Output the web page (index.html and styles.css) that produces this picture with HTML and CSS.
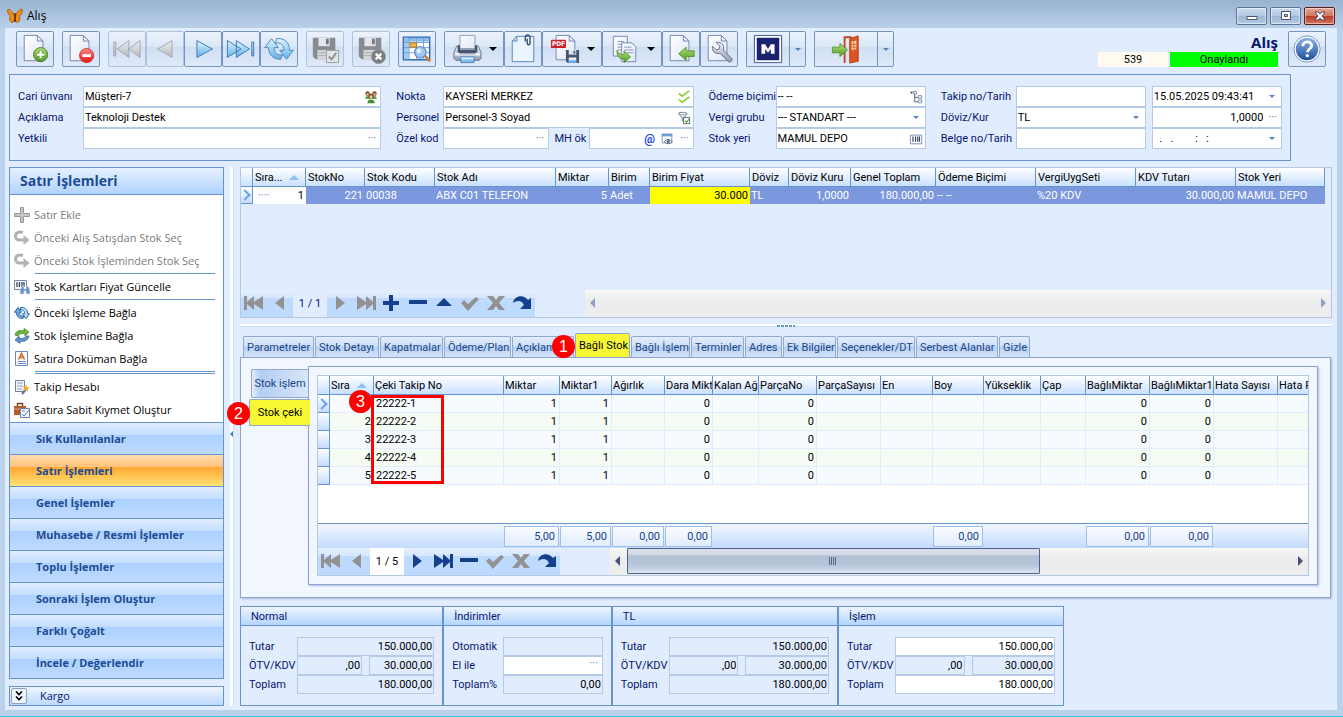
FILE: index.html
```html
<!DOCTYPE html>
<html lang="tr">
<head>
  <meta charset="UTF-8">
  <meta name="viewport" content="width=device-width, initial-scale=1.0">
  <title>Alış</title>
  <link rel="stylesheet" href="styles.css">
</head>
<body>
  <!-- Icon sprite -->
  <svg class="sprite" aria-hidden="true">
    <defs>
      <linearGradient id="gBlue" x1="0" y1="0" x2="0" y2="1"><stop offset="0" stop-color="#dff3ff"/><stop offset="1" stop-color="#63b1e8"/></linearGradient>
      <linearGradient id="gGray" x1="0" y1="0" x2="0" y2="1"><stop offset="0" stop-color="#eceef1"/><stop offset="1" stop-color="#b4b8be"/></linearGradient>
      <linearGradient id="gPage" x1="0" y1="0" x2="1" y2="1"><stop offset="0" stop-color="#ffffff"/><stop offset="1" stop-color="#dfe6f5"/></linearGradient>
      <linearGradient id="gGreen" x1="0" y1="0" x2="0" y2="1"><stop offset="0" stop-color="#b5e27c"/><stop offset="1" stop-color="#4f9a25"/></linearGradient>
      <linearGradient id="gRed" x1="0" y1="0" x2="0" y2="1"><stop offset="0" stop-color="#ff8d86"/><stop offset="1" stop-color="#e01414"/></linearGradient>
      <linearGradient id="gHelp" x1="0" y1="0" x2="0" y2="1"><stop offset="0" stop-color="#8fb2e6"/><stop offset="1" stop-color="#1e4f9e"/></linearGradient>
      <linearGradient id="gSteel" x1="0" y1="0" x2="0" y2="1"><stop offset="0" stop-color="#f3f5f9"/><stop offset="1" stop-color="#8d9bb3"/></linearGradient>
    </defs>
    <symbol id="page" viewBox="0 0 32 32"><path d="M4.500 1.500h14l6 6v21h-20z" fill="url(#gPage)" stroke="#7484b0"/><path d="M18.500 1.500v6h6z" fill="#e9effa" stroke="#7484b0"/></symbol>
    <symbol id="add" viewBox="0 0 32 32"><use href="#page"/><circle cx="22" cy="22" r="7.500" fill="url(#gGreen)" stroke="#3f7d1e"/><path d="M20.500 17.500h3v3h3v3h-3v3h-3v-3h-3v-3h3z" fill="#fff" stroke="#4b8a28" stroke-width=".6"/></symbol>
    <symbol id="del" viewBox="0 0 32 32"><use href="#page"/><circle cx="22" cy="23" r="7.500" fill="url(#gRed)" stroke="#d23030"/><rect x="17.500" y="21.500" width="9" height="3" fill="#fff"/></symbol>
    <symbol id="first" viewBox="0 0 32 32"><path d="M2 8.500h2v15H2zM18 7v18L5.500 16zM30 7v18L17.500 16z" fill="url(#gGray)" stroke="#a2a6ad"/></symbol>
    <symbol id="prev" viewBox="0 0 32 32"><path d="M23.500 7v18L8 16z" fill="url(#gGray)" stroke="#a2a6ad"/></symbol>
    <symbol id="next" viewBox="0 0 32 32"><path d="M9.500 7v18L26 16z" fill="url(#gBlue)" stroke="#3c77b5"/></symbol>
    <symbol id="last" viewBox="0 0 32 32"><path d="M11 7v18L25 16zM1.500 7v18L16 16zM27.500 8.500h2v15h-2z" fill="url(#gBlue)" stroke="#3c77b5"/></symbol>
    <symbol id="refresh" viewBox="0 0 32 32"><path d="M8 5L.8 14.500h4c0 9 7 13 13 12.500l2-5c-5 1.500-9-1.500-9-7.500h4.500z" fill="url(#gBlue)" stroke="#4a87bf"/><path d="M24 27l7.300-9.500h-4c0-9-6-13.500-14-12.500l-1 5c5-1.500 9 1.500 9 7.500h-4.500z" fill="url(#gBlue)" stroke="#4a87bf"/></symbol>
    <symbol id="disk" viewBox="0 0 32 32"><path d="M3 4h24v23H6l-3-3z" fill="#888c92"/><path d="M9 4h12v9H9z" fill="#e4e6e9"/><path d="M17 5h3v6h-3z" fill="#777b81"/><path d="M8 17h14v10H8z" fill="#d4d7da"/><path d="M9 20h12M9 23h12" stroke="#a5a9ae"/></symbol>
    <symbol id="diskok" viewBox="0 0 32 32"><use href="#disk"/><rect x="17.500" y="17.500" width="13" height="13" fill="#e1e3e6" stroke="#9a9ea5"/><path d="M20 24l3 3 5-7" fill="none" stroke="#8a8e94" stroke-width="2"/></symbol>
    <symbol id="diskx" viewBox="0 0 32 32"><use href="#disk"/><circle cx="24" cy="24" r="7.500" fill="#7a7d82" stroke="#92969c"/><path d="M21 21l6 6M27 21l-6 6" stroke="#fff" stroke-width="2.500"/></symbol>
    <symbol id="gridfind" viewBox="0 0 32 32"><path d="M1.500 3.500h28v24h-28z" fill="#fff" stroke="#2b64b5" stroke-width="1.500"/><path d="M2 4h5v23H2z" fill="#a5cdf0"/><path d="M2 4h27v4H2z" fill="#8cbdea"/><path d="M7.500 4v23M15.500 4v23M23 4v23M2 9h27M2 14.500h27M2 20h27" stroke="#6d9fd6"/><rect x="8.500" y="9.500" width="7" height="4.500" fill="#f2b84c" stroke="#b3751c"/><path d="M24 23l6 6" stroke="#c9813f" stroke-width="3"/><circle cx="19.500" cy="19.500" r="6" fill="#9dc9f7" stroke="#7390c4" stroke-width="1.500"/><circle cx="18" cy="18" r="2.500" fill="#dceeff"/></symbol>
    <symbol id="printer" viewBox="0 0 32 32"><path d="M8.500 1.500h16v14h-16z" fill="url(#gPage)" stroke="#8c9bb5"/><path d="M5 13h3v4h17v-4h3l3 7v6l-2 2H4l-2-2v-6z" fill="url(#gSteel)" stroke="#66738c"/><path d="M6 12h2.500v5h16v-5H27v7l-2 1.500H8L6 19z" fill="#465470"/><path d="M3 20.500h4l2 1.500h15l2-1.500h4V23H3z" fill="#f3f5f9"/><path d="M9.500 24.500h14v6h-14z" fill="#7fbdf0" stroke="#4f7fb8"/><path d="M10 25h13v2H10z" fill="#d9effd"/></symbol>
    <symbol id="clip" viewBox="0 0 32 32"><path d="M9.500 2.500h18v27h-23v-22z" fill="#eaf4ff" stroke="#4f80bd"/><path d="M9.500 2.500v5h-5z" fill="#cfe3f8" stroke="#4f80bd"/><path d="M18.500 8V3.500a2.500 2.500 0 0 1 5 0V10a1.500 1.500 0 0 1-3 0V5" fill="none" stroke="#3a4d6c" stroke-width="1.500"/></symbol>
    <symbol id="pdf" viewBox="0 0 32 32"><path d="M6.500 1.500h14l6 6v20h-20z" fill="url(#gPage)" stroke="#7484b0"/><path d="M20.500 1.500v6h6z" fill="#e9effa" stroke="#7484b0"/><rect x="1" y="6" width="16" height="9" rx="1" fill="#cf2027"/><text x="2" y="13" class="pdf-text">PDF</text><path d="M17 17h14v14H19l-2-2z" fill="#46546e"/><path d="M20 17h8v5h-8z" fill="#dfe5ee"/><path d="M25 18h2v3h-2z" fill="#46546e"/><path d="M20 25h8v6h-8z" fill="#e9eef5"/><path d="M20 28h8v3h-8z" fill="#67b0e6"/></symbol>
    <symbol id="copy" viewBox="0 0 32 32"><path d="M3.500 2.500h15v21h-15z" fill="url(#gPage)" stroke="#7484b0"/><path d="M8 8h7M8 11h7M8 14h7M8 17h7" stroke="#8193c4"/><path d="M12.500 9.500h11l4 4v16h-15z" fill="url(#gPage)" stroke="#7484b0"/><path d="M15 14h8M15 17h10M18 20h7" stroke="#8193c4"/><path d="M7.500 17.500c1 3 4 5 7.500 4.500v-4l7 6.500-7 6V27c-5 0-8-4-7.500-9.500z" fill="url(#gGreen)" stroke="#58942d"/></symbol>
    <symbol id="pageback" viewBox="0 0 32 32"><use href="#page"/><path d="M13.500 21l8-7v4h8.500v6h-8.500v4z" fill="url(#gGreen)" stroke="#58942d"/></symbol>
    <symbol id="wrench" viewBox="0 0 32 32"><use href="#page"/><path d="M9 13l4 4 3-1 1-3-4-4c4-1 8 1.500 8 6l-.5 2 9 9c1 3-1 4.500-3.500 3.500l-9-9c-5 1.500-9-2.500-8-7.500z" fill="url(#gSteel)" stroke="#5e6d85"/></symbol>
    <symbol id="mlogo" viewBox="0 0 32 32"><path d="M1.500 1.500h29v29h-29z" fill="#fff" stroke="#3a4c96"/><path d="M4 4h24v24H4z" fill="#1b2270"/><path d="M9 21V11h4l3 5 3-5h4v10h-4v-5l-3 4-3-4v5z" fill="#fff"/></symbol>
    <symbol id="door" viewBox="0 0 32 32"><path d="M14.500 31V3.500H22" fill="none" stroke="#c2481f" stroke-width="2"/><path d="M20 5l9-3v27l-9 2z" fill="#dc5525" stroke="#b73c12"/><path d="M22 8l5-1v9l-5 1z" fill="#ffe3b5"/><path d="M24.500 7v9M22 11h5M22 14h5" stroke="#dc5525"/><path d="M1.500 14h8v-4l8 7-8 7v-4h-8z" fill="url(#gGreen)" stroke="#58942d"/></symbol>
    <symbol id="help" viewBox="0 0 32 32"><circle cx="16" cy="16" r="14" fill="#fff" stroke="#7595c4"/><circle cx="16" cy="16" r="12" fill="url(#gHelp)"/><path d="M11.500 13c0-6 9.500-6 9.500-.5 0 3-4.500 3.500-4.500 7" fill="none" stroke="#fff" stroke-width="3"/><circle cx="16.300" cy="23" r="1.800" fill="#fff"/></symbol>
    <symbol id="butterfly" viewBox="0 0 16 16"><path d="M7.500 8C5 2 1 0 .5 2c0 3 1.500 5 3 6-2 2 0 6.500 1.500 6.500s2-2 2.500-4c.500 2 1.500 4 3 4S14 10 12 8c2-1 3.500-3 3.500-6C15 0 10.500 2 8.500 8z" fill="#f08a12" stroke="#a65209" stroke-width=".8"/><path d="M8 5v9" stroke="#4d2706" stroke-width="1.500"/></symbol>
    <symbol id="people" viewBox="0 0 16 16"><circle cx="4" cy="4" r="2.500" fill="#7a4b2b"/><circle cx="12" cy="4" r="2.500" fill="#7a4b2b"/><circle cx="4" cy="4.500" r="1.200" fill="#f1c595"/><circle cx="12" cy="4.500" r="1.200" fill="#f1c595"/><path d="M1 10l2-3h3l1 3zM9 10l1-3h3l2 3z" fill="#3f9430"/><circle cx="8" cy="7" r="3" fill="#8d5933"/><circle cx="8" cy="8" r="1.600" fill="#f1c595"/><path d="M3.500 15l2-4h5l2 4z" fill="#3f9430"/></symbol>
    <symbol id="checks" viewBox="0 0 16 16"><path d="M2 4l4 3 8-6M2 11l4 3 8-6" fill="none" stroke="#8fce3b" stroke-width="2"/></symbol>
    <symbol id="funnel" viewBox="0 0 16 16"><path d="M1.500 3c0-2 10-2 10 0L8 8v5l-2-2V8z" fill="#dfe4ec" stroke="#6b7689"/><ellipse cx="6.500" cy="3" rx="4" ry="1.300" fill="#fff" stroke="#6b7689" stroke-width=".7"/><rect x="7.500" y="7.500" width="7" height="7" fill="#fff" stroke="#54627c"/><path d="M9 11l2 2 3-4" fill="none" stroke="#5ca132" stroke-width="1.500"/></symbol>
    <symbol id="eye" viewBox="0 0 16 16"><path d="M2.500 2.500h11v10h-11z" fill="#fff" stroke="#668db8"/><path d="M2 2h12v3H2z" fill="#6c9cd0"/><path d="M5 11q4-5 9 0-4 5-9 0z" fill="#fff" stroke="#45536b"/><circle cx="9.500" cy="11" r="1.700" fill="#45536b"/></symbol>
    <symbol id="tree" viewBox="0 0 16 16"><path d="M1 2h4L3 4.500z" fill="#44516d"/><path d="M6.500 4v9.500H10M6.500 8.500H10" fill="none" stroke="#44516d"/><path d="M5.500 1.500h3v3h-3zM10.500 6.500h4v3h-4zM10.500 11.500h4v3h-4z" fill="#fff" stroke="#6d7fa6"/></symbol>
    <symbol id="barcode" viewBox="0 0 16 16"><path d="M1.500 3.500h13v10h-13z" fill="#fff" stroke="#7182ad"/><path d="M4.500 5v6M7.500 5v6M10 5v6M12 5v6" stroke="#30405f" stroke-width="1.300"/></symbol>
    <symbol id="plus" viewBox="0 0 16 16"><path d="M6.500.500h3v6h6v3h-6v6h-3v-6h-6v-3h6z" fill="#c4c6c8" stroke="#97999b"/></symbol>
    <symbol id="turn" viewBox="0 0 16 16"><path d="M9 2.500C-.5 0-.5 10.500 6 10h5" fill="none" stroke="#b0b2b4" stroke-width="3"/><path d="M9.500 5l6 5-6 5z" fill="#b0b2b4"/></symbol>
    <symbol id="stock" viewBox="0 0 16 16"><path d="M.5 1.500h12v9H.5z" fill="#fff" stroke="#7182ad"/><path d="M3 3v5M5.500 3v5M8 3v5M10 3v5" stroke="#30405f" stroke-width="1.300"/><path d="M6 11l2-4h2v3h2V7h2l2 4v4h-4v-3h-2v3H6z" fill="#6f92c9" stroke="#dbe6f7" stroke-width=".7"/></symbol>
    <symbol id="cycle" viewBox="0 0 32 32"><path d="M8 5L.8 14.500h4c0 9 7 13 13 12.500l2-5c-5 1.500-9-1.500-9-7.500h4.500z" fill="#6da9dd" stroke="#2d66a5" stroke-width="2"/><path d="M24 27l7.300-9.500h-4c0-9-6-13.500-14-12.500l-1 5c5-1.500 9 1.500 9 7.500h-4.500z" fill="#b4daf6" stroke="#2d66a5" stroke-width="2"/></symbol>
    <symbol id="swap" viewBox="0 0 16 16"><path d="M1 7c1-5 6-5 9-4V.5L15 4l-4 4V6C7 5 5 6 4 8z" fill="#6db445" stroke="#3c7c21" stroke-width=".7"/><path d="M15 8c-1 5-6 6-9 5v2.500L1 12l4-4v2c4 1 6 0 7-2z" fill="#5d91cf" stroke="#335f9b" stroke-width=".7"/></symbol>
    <symbol id="doc" viewBox="0 0 16 16"><path d="M1.500.500h12v14h-12z" fill="#f9fbff" stroke="#6e86bb"/><path d="M4.500 8.500l3-6 3 6M5.500 6.500h4" fill="none" stroke="#d8651f" stroke-width="1.500"/><path d="M4 10.500h8M4 12.500h8" stroke="#7288bd"/></symbol>
    <symbol id="wand" viewBox="0 0 16 16"><path d="M1.500 1.500h9v11h-9z" fill="#f3f6fc" stroke="#73809a"/><path d="M3 4h6M3 7h6M3 10h5" stroke="#8f9dba"/><path d="M8 15l5-6" stroke="#51719f" stroke-width="2"/><path d="M12 5l1 3 3 .5-2.500 1.500.5 3-2-2-3 1 1.500-3L9 7l2.500.5z" fill="#f2ad2f"/></symbol>
    <symbol id="asset" viewBox="0 0 16 16"><path d="M3.500 4V1.500h5V4" fill="none" stroke="#79431e" stroke-width="1.500"/><path d="M0 4h12v9H0z" fill="#b05e2c"/><path d="M0 7h12" stroke="#e5a26e"/><path d="M6.500 6.500h9v9h-9z" fill="#f3f7fd" stroke="#6d83a9"/><path d="M8 9h3M8 12l2 2 5-6" fill="none" stroke="#5579b3"/></symbol>
    <symbol id="n-first" viewBox="0 0 20 18"><path d="M0 2h3v6l7-6v6l9-6v14l-9-6v6l-7-6v6H0z"/></symbol>
    <symbol id="n-prev" viewBox="0 0 20 18"><path d="M14 2v14L5 9z"/></symbol>
    <symbol id="n-next" viewBox="0 0 20 18"><path d="M6 2v14l9-7z"/></symbol>
    <symbol id="n-last" viewBox="0 0 20 18"><path d="M20 2h-3v6l-7-6v6L1 2v14l9-6v6l7-6v6h3z"/></symbol>
    <symbol id="n-plus" viewBox="0 0 20 18"><path d="M7 1h4v6h6v4h-6v6H7v-6H1V7h6z"/></symbol>
    <symbol id="n-minus" viewBox="0 0 20 18"><path d="M1 6h18v4H1z"/></symbol>
    <symbol id="n-up" viewBox="0 0 20 18"><path d="M2 12h16l-8-8z"/></symbol>
    <symbol id="n-check" viewBox="0 0 20 18"><path d="M1 9l3-3 4 4 8-7 3 2L8 17z"/></symbol>
    <symbol id="n-x" viewBox="0 0 20 18"><path d="M1 2h6l3 4 3-4h6l-6 7 6 7h-6l-3-4-3 4H1l6-7z"/></symbol>
    <symbol id="n-redo" viewBox="0 0 20 18"><path d="M1 9C2 1 12 0 16 6l3-2v11H8l4-4C10 6 5 6 1 9z"/></symbol>
  </svg>

  <header class="titlebar">
    <svg class="icon16"><use href="#butterfly"/></svg>
    <span class="title">Alış</span>
    <button class="win-btn" aria-label="Küçült"><svg viewBox="0 0 12 12"><path d="M1 6.500h10v3H1z"/></svg></button>
    <button class="win-btn" aria-label="Büyüt"><svg viewBox="0 0 12 12"><path d="M1.500 1.500h9v8h-9zM4.500 4.500h3v2h-3z" fill-rule="evenodd"/></svg></button>
    <button class="win-btn win-close" aria-label="Kapat"><svg viewBox="0 0 12 12"><path d="M1 2h3l2 2 2-2h3L8 6l3 4H8L6 8l-2 2H1l3-4z"/></svg></button>
  </header>

  <div class="client">
    <!-- Toolbar -->
    <div class="toolbar">
      <div class="group"><button class="tool" aria-label="Yeni"><svg><use href="#add"/></svg></button></div>
      <div class="group"><button class="tool" aria-label="Sil"><svg><use href="#del"/></svg></button></div>
      <div class="group">
        <button class="tool" disabled aria-label="İlk"><svg><use href="#first"/></svg></button>
        <button class="tool" disabled aria-label="Önceki"><svg><use href="#prev"/></svg></button>
        <button class="tool" aria-label="Sonraki"><svg><use href="#next"/></svg></button>
        <button class="tool" aria-label="Son"><svg><use href="#last"/></svg></button>
        <button class="tool" aria-label="Yenile"><svg><use href="#refresh"/></svg></button>
      </div>
      <div class="group"><button class="tool" disabled aria-label="Kaydet"><svg><use href="#diskok"/></svg></button></div>
      <div class="group"><button class="tool" disabled aria-label="Vazgeç"><svg><use href="#diskx"/></svg></button></div>
      <div class="group"><button class="tool" aria-label="Ara"><svg><use href="#gridfind"/></svg></button></div>
      <div class="group">
        <button class="tool wide" aria-label="Yazdır"><svg><use href="#printer"/></svg><i class="caret"></i></button>
        <button class="tool" aria-label="Ekler"><svg><use href="#clip"/></svg></button>
        <button class="tool wide" aria-label="PDF kaydet"><svg><use href="#pdf"/></svg><i class="caret"></i></button>
        <button class="tool wide" aria-label="Kopyala"><svg><use href="#copy"/></svg><i class="caret"></i></button>
        <button class="tool" aria-label="Aktar"><svg><use href="#pageback"/></svg></button>
        <button class="tool" aria-label="Ayarlar"><svg><use href="#wrench"/></svg></button>
      </div>
      <div class="group">
        <button class="tool split-main" aria-label="M"><svg><use href="#mlogo"/></svg></button>
        <button class="tool split" aria-label="M menüsü"><i class="caret small"></i></button>
      </div>
      <div class="group">
        <button class="tool split-main exit" aria-label="Çıkış"><svg><use href="#door"/></svg></button>
        <button class="tool split" aria-label="Çıkış menüsü"><i class="caret small"></i></button>
      </div>
      <div class="status">
        <h1>Alış</h1>
        <div class="status-row"><span class="rec-no">539</span><span class="approved">Onaylandı</span></div>
      </div>
      <button class="tool" aria-label="Yardım"><svg><use href="#help"/></svg></button>
    </div>

    <!-- Header form -->
    <form class="head-form">
      <div class="form-col col-a">
        <label for="cari">Cari ünvanı</label>
        <div class="field"><input id="cari" value="Müşteri-7"><svg class="icon14"><use href="#people"/></svg></div>
        <label for="aciklama">Açıklama</label>
        <div class="field"><input id="aciklama" value="Teknoloji Destek"></div>
        <label for="yetkili">Yetkili</label>
        <div class="field"><input id="yetkili"><span class="dots">···</span></div>
      </div>
      <div class="form-col col-b">
        <label for="nokta">Nokta</label>
        <div class="field"><input id="nokta" value="KAYSERİ MERKEZ"><svg class="icon14"><use href="#checks"/></svg></div>
        <label for="personel">Personel</label>
        <div class="field"><input id="personel" value="Personel-3 Soyad"><svg class="icon14"><use href="#funnel"/></svg></div>
        <label for="ozel">Özel kod</label>
        <div class="field-pair">
          <div class="field"><input id="ozel"><span class="dots">···</span></div>
          <label for="mhok">MH ök</label>
          <div class="field"><input id="mhok"><b class="at">@</b><svg class="icon14"><use href="#eye"/></svg><span class="dots">···</span></div>
        </div>
      </div>
      <div class="form-col col-c">
        <label for="odeme">Ödeme biçimi</label>
        <div class="field"><input id="odeme" value="-- --"><svg class="icon14"><use href="#tree"/></svg></div>
        <label for="vergi">Vergi grubu</label>
        <div class="field"><select id="vergi"><option>--- STANDART ---</option></select><i class="caret small"></i></div>
        <label for="yer">Stok yeri</label>
        <div class="field"><input id="yer" value="MAMUL DEPO"><svg class="icon14"><use href="#barcode"/></svg></div>
      </div>
      <div class="form-col col-d">
        <label for="takip">Takip no/Tarih</label>
        <div class="field"><input id="takip"></div>
        <div class="field"><input aria-label="Tarih" value="15.05.2025 09:43:41"><i class="caret small"></i></div>
        <label for="doviz">Döviz/Kur</label>
        <div class="field"><select id="doviz"><option>TL</option></select><i class="caret small"></i></div>
        <div class="field"><input class="num" aria-label="Kur" value="1,0000"><span class="dots">···</span></div>
        <label for="belge">Belge no/Tarih</label>
        <div class="field"><input id="belge"></div>
        <div class="field"><input aria-label="Belge tarihi" value="  .   .        :   :"><i class="caret small"></i></div>
      </div>
    </form>

    <div class="work">
      <!-- Sidebar -->
      <aside class="sidebar">
        <div class="side-box">
          <h2>Satır İşlemleri</h2>
          <div class="actions">
            <button disabled><svg class="icon16"><use href="#plus"/></svg>Satır Ekle</button>
            <button disabled><svg class="icon16"><use href="#turn"/></svg>Önceki Alış Satışdan Stok Seç</button>
            <button disabled><svg class="icon16"><use href="#turn"/></svg>Önceki Stok İşleminden Stok Seç</button>
            <hr>
            <button><svg class="icon16"><use href="#stock"/></svg>Stok Kartları Fiyat Güncelle</button>
            <hr>
            <button><svg class="icon16"><use href="#cycle"/></svg>Önceki İşleme Bağla</button>
            <button><svg class="icon16"><use href="#swap"/></svg>Stok İşlemine Bağla</button>
            <button><svg class="icon16"><use href="#doc"/></svg>Satıra Doküman Bağla</button>
            <hr>
            <hr>
            <button><svg class="icon16"><use href="#wand"/></svg>Takip Hesabı</button>
            <button><svg class="icon16"><use href="#asset"/></svg>Satıra Sabit Kıymet Oluştur</button>
          </div>
          <nav class="side-nav">
            <button>Sık Kullanılanlar</button>
            <button class="active">Satır İşlemleri</button>
            <button>Genel İşlemler</button>
            <button>Muhasebe / Resmi İşlemler</button>
            <button>Toplu İşlemler</button>
            <button>Sonraki İşlem Oluştur</button>
            <button>Farklı Çoğalt</button>
            <button>İncele / Değerlendir</button>
          </nav>
        </div>
        <div class="cargo">
          <button aria-label="Kargo aç"><svg viewBox="0 0 12 12"><path d="M3 1.500L6 4.500l3-3M3 6.500l3 3 3-3" fill="none" stroke="#000" stroke-width="1.600"/></svg></button>
          <span>Kargo</span>
        </div>
      </aside>

      <div class="v-splitter"></div>

      <main>
        <!-- Order lines -->
        <section class="lines">
          <table class="grid lines-grid">
            <colgroup><col><col><col><col><col><col><col><col><col><col><col><col><col><col><col></colgroup>
            <thead>
              <tr><th></th><th>Sıra...<i class="sort"></i></th><th>StokNo</th><th>Stok Kodu</th><th>Stok Adı</th><th>Miktar</th><th>Birim</th><th>Birim Fiyat</th><th>Döviz</th><th>Döviz Kuru</th><th>Genel Toplam</th><th>Ödeme Biçimi</th><th>VergiUygSeti</th><th>KDV Tutarı</th><th>Stok Yeri</th></tr>
            </thead>
            <tbody>
              <tr><td class="ind current"></td><td class="order num"><span class="dots">····</span>1</td><td class="num">221</td><td>00038</td><td>ABX C01 TELEFON</td><td class="num">5</td><td>Adet</td><td class="price num">30.000</td><td>TL</td><td class="num">1,0000</td><td class="num">180.000,00</td><td>-- --</td><td>%20 KDV</td><td class="num">30.000,00</td><td>MAMUL DEPO</td></tr>
            </tbody>
          </table>
          <div class="grid-foot">
            <div class="navigator">
              <button disabled aria-label="İlk"><svg><use href="#n-first"/></svg></button>
              <button disabled aria-label="Önceki"><svg><use href="#n-prev"/></svg></button>
              <span>1 / 1</span>
              <button disabled aria-label="Sonraki"><svg><use href="#n-next"/></svg></button>
              <button disabled aria-label="Son"><svg><use href="#n-last"/></svg></button>
              <button aria-label="Ekle"><svg><use href="#n-plus"/></svg></button>
              <button aria-label="Sil"><svg><use href="#n-minus"/></svg></button>
              <button aria-label="Düzenle"><svg><use href="#n-up"/></svg></button>
              <button disabled aria-label="Onayla"><svg><use href="#n-check"/></svg></button>
              <button disabled aria-label="İptal"><svg><use href="#n-x"/></svg></button>
              <button aria-label="Yenile"><svg><use href="#n-redo"/></svg></button>
            </div>
            <div class="scrollbar off"><i class="arrow-l"></i><i class="arrow-r"></i></div>
          </div>
        </section>

        <div class="h-splitter"></div>

        <!-- Detail tabs -->
        <div class="tabs">
          <button>Parametreler</button>
          <button>Stok Detayı</button>
          <button>Kapatmalar</button>
          <button>Ödeme/Plan</button>
          <button>Açıklama</button>
          <button class="active">Bağlı Stok<b class="badge">1</b></button>
          <button>Bağlı İşlem</button>
          <button>Terminler</button>
          <button>Adres</button>
          <button>Ek Bilgiler</button>
          <button>Seçenekler/DT</button>
          <button>Serbest Alanlar</button>
          <button>Gizle</button>
        </div>
        <section class="tab-pane">
          <div class="side-tabs">
            <button>Stok işlem</button>
            <button class="active">Stok çeki<b class="badge">2</b></button>
          </div>
          <div class="inner-pane">
            <div class="links">
              <div class="links-view">
                <table class="grid links-grid">
                  <colgroup><col><col><col><col><col><col><col><col><col><col><col><col><col><col><col><col><col><col></colgroup>
                  <thead>
                    <tr><th></th><th>Sıra<i class="sort"></i></th><th>Çeki Takip No</th><th>Miktar</th><th>Miktar1</th><th>Ağırlık</th><th>Dara Mikt</th><th>Kalan Ağ</th><th>ParçaNo</th><th>ParçaSayısı</th><th>En</th><th>Boy</th><th>Yükseklik</th><th>Çap</th><th>BağlıMiktar</th><th>BağlıMiktar1</th><th>Hata Sayısı</th><th>Hata F</th></tr>
                  </thead>
                  <tbody id="linkRows"></tbody>
                  <tfoot>
                    <tr><td></td><td></td><td></td><td><output>5,00</output></td><td><output>5,00</output></td><td><output>0,00</output></td><td><output>0,00</output></td><td></td><td></td><td></td><td></td><td><output>0,00</output></td><td></td><td></td><td><output>0,00</output></td><td><output>0,00</output></td><td></td><td></td></tr>
                  </tfoot>
                </table>
              </div>
              <div class="mark"><b class="badge">3</b></div>
              <div class="grid-foot">
                <div class="navigator">
                  <button disabled aria-label="İlk"><svg><use href="#n-first"/></svg></button>
                  <button disabled aria-label="Önceki"><svg><use href="#n-prev"/></svg></button>
                  <span>1 / 5</span>
                  <button aria-label="Sonraki"><svg><use href="#n-next"/></svg></button>
                  <button aria-label="Son"><svg><use href="#n-last"/></svg></button>
                  <button aria-label="Sil"><svg><use href="#n-minus"/></svg></button>
                  <button disabled aria-label="Onayla"><svg><use href="#n-check"/></svg></button>
                  <button disabled aria-label="İptal"><svg><use href="#n-x"/></svg></button>
                  <button aria-label="Yenile"><svg><use href="#n-redo"/></svg></button>
                </div>
                <div class="scrollbar"><i class="arrow-l"></i><div class="thumb"></div><i class="arrow-r"></i></div>
              </div>
            </div>
          </div>
        </section>

        <!-- Totals -->
        <section class="totals">
          <div class="total-box normal">
            <h3>Normal</h3>
            <div class="total-form">
              <label for="n1">Tutar</label><div class="cells"><input id="n1" readonly value="150.000,00"></div>
              <label for="n2">ÖTV/KDV</label><div class="cells"><input id="n2" readonly value=",00"><input readonly aria-label="KDV" value="30.000,00"></div>
              <label for="n3">Toplam</label><div class="cells"><input id="n3" readonly value="180.000,00"></div>
            </div>
          </div>
          <div class="total-box discount">
            <h3>İndirimler</h3>
            <div class="total-form">
              <label for="d1">Otomatik</label><div class="cells"><input id="d1" readonly></div>
              <label for="d2">El ile</label><div class="cells edit"><input id="d2"><span class="dots">···</span></div>
              <label for="d3">Toplam%</label><div class="cells"><input id="d3" readonly value="0,00"></div>
            </div>
          </div>
          <div class="total-box">
            <h3>TL</h3>
            <div class="total-form">
              <label for="t1">Tutar</label><div class="cells"><input id="t1" readonly value="150.000,00"></div>
              <label for="t2">ÖTV/KDV</label><div class="cells"><input id="t2" readonly value=",00"><input readonly aria-label="KDV TL" value="30.000,00"></div>
              <label for="t3">Toplam</label><div class="cells"><input id="t3" readonly value="180.000,00"></div>
            </div>
          </div>
          <div class="total-box">
            <h3>İşlem</h3>
            <div class="total-form">
              <label for="i1">Tutar</label><div class="cells"><input id="i1" value="150.000,00"></div>
              <label for="i2">ÖTV/KDV</label><div class="cells"><input id="i2" readonly value=",00"><input readonly aria-label="KDV işlem" value="30.000,00"></div>
              <label for="i3">Toplam</label><div class="cells"><input id="i3" value="180.000,00"></div>
            </div>
          </div>
        </section>
      </main>
    </div>
  </div>

  <script>
    const linkRows = ["22222-1", "22222-2", "22222-3", "22222-4", "22222-5"];

    // one value per column after the tracking number
    const values = ["1", "1", "", "0", "", "0", "", "", "", "", "", "0", "0", "", ""];

    const body = document.getElementById("linkRows");
    linkRows.forEach(function (no, i) {
      const row = document.createElement("tr");
      const cells = values.map(v => `<td class="num">${v}</td>`).join("");
      row.innerHTML = `<td class="ind${i === 0 ? " current" : ""}"></td><td class="num">${i === 0 ? "" : i + 1}</td><td>${no}</td>${cells}`;
      body.appendChild(row);
    });
    body.insertAdjacentHTML("beforeend", '<tr class="filler"><td colspan="18"></td></tr>');
  </script>
</body>
</html>
```

FILE: styles.css
```css
* {
  box-sizing: border-box;
}

body {
  margin: 0;
  min-height: 100vh;
  display: flex;
  flex-direction: column;
  padding: 0 6px 6px 5px;
  border-bottom: 1px solid #30c8dc;
  background: #b9d1ea;
  font: 11px/14px Roboto, "Open Sans", sans-serif;
  color: #000;
}

button,
input,
select {
  font: inherit;
  color: inherit;
  margin: 0;
}

button {
  padding: 0;
  border: none;
  background: none;
}

label {
  white-space: nowrap;
}

.sprite {
  position: absolute;
  width: 0;
  height: 0;
}

.pdf-text {
  font: bold 7px "DejaVu Sans Condensed", "DejaVu Sans", sans-serif;
  fill: #fff;
}

.icon16 {
  width: 16px;
  height: 16px;
  flex: none;
}

.icon14 {
  width: 14px;
  height: 14px;
  flex: none;
  margin-right: 2px;
}

/* Title bar */
.titlebar {
  height: 28px;
  margin: 0 -6px 0 -5px;
  padding: 4px 8px 0 7px;
  display: flex;
  align-items: center;
  gap: 3px;
  background: linear-gradient(#98b3d0, #bad0e9);
}

.title {
  flex: 1;
  margin-left: 1px;
  font-family: "Open Sans", sans-serif;
  font-size: 12px;
}

.win-btn {
  width: 31px;
  height: 18px;
  border: 1px solid #5c7391;
  border-radius: 2px;
  background: linear-gradient(#c9dcf0, #b3c9e2 50%, #9bb6d4 50%, #b5cbe5);
  box-shadow: inset 0 0 0 1px rgba(255, 255, 255, 0.5);
}

.win-btn svg {
  width: 12px;
  height: 12px;
  display: block;
  margin: auto;
  fill: #fff;
  stroke: #4a5565;
}

.win-close {
  border-color: #5b1e1c;
  background: linear-gradient(#e5a698, #d3785f 50%, #b9392a 50%, #d2745b);
}

/* Client area */
.client {
  flex: 1;
  background: #e1edff;
  padding: 3px 5px 4px 4px;
  display: flex;
  flex-direction: column;
}

/* Toolbar */
.toolbar {
  display: flex;
  gap: 8px;
  padding: 0 6px 0 7px;
}

.group {
  display: flex;
}

.tool {
  width: 38px;
  height: 36px;
  display: flex;
  align-items: center;
  justify-content: center;
  border: 1px solid #7794bf;
  border-radius: 2px;
  background: linear-gradient(#eaf2fd, #dbe7f6 45%, #cfdff2 45%, #dfeafa);
}

.tool svg {
  width: 30px;
  height: 30px;
}

.tool:disabled {
  border-color: #b0c3de;
}

.tool.wide {
  width: 60px;
  gap: 7px;
}

.split-main {
  width: 43px;
  border-right: none;
  border-radius: 2px 0 0 2px;
}

.split-main.exit {
  width: 63px;
}

.split {
  width: 17px;
  border-radius: 0 2px 2px 0;
}

.caret {
  flex: none;
  border: 4px solid transparent;
  border-top-color: #000;
  border-bottom: none;
}

.caret.small {
  border-width: 3px;
  border-top-color: #5584bd;
  border-bottom: none;
}

.status {
  margin-left: auto;
  width: 180px;
  margin-right: 2px;
}

.status h1 {
  margin: 2px 0 0;
  font: bold 15px/19px "Open Sans", sans-serif;
  color: #07156e;
  text-align: right;
}

.status-row {
  display: flex;
  gap: 2px;
  text-align: center;
  line-height: 15px;
}

.rec-no {
  width: 70px;
  background: #fffbf0;
}

.approved {
  flex: 1;
  background: #0f0;
}

/* Header form */
.head-form {
  margin: 7px 41px 6px 0;
  padding: 11px 8px;
  border: 1px solid #6694cf;
  display: flex;
  gap: 15px;
  color: #07156e;
}

.form-col {
  display: grid;
  grid-auto-rows: 21px;
  align-items: center;
}

.col-a {
  flex: 363 1 0;
  grid-template-columns: 65px 1fr;
}

.col-b {
  flex: 297 1 0;
  grid-template-columns: 47px 1fr;
}

.col-c {
  flex: 217 1 0;
  grid-template-columns: 67px 1fr;
}

.col-d {
  flex: 341 1 0;
  grid-template-columns: 75px 1fr 6px 1fr;
}

.col-d .field:nth-child(3n) {
  grid-column: 4;
}

.field {
  height: 21px;
  min-width: 0;
  display: flex;
  align-items: center;
  border: 1px solid #b5cae6;
  background: #fff;
  color: #000;
}

.field input,
.field select {
  flex: 1;
  min-width: 0;
  width: 0;
  height: 19px;
  padding: 0 1px;
  border: none;
  background: none;
  appearance: none;
  white-space: pre;
}

.field .caret {
  margin-right: 6px;
}

.field-pair {
  display: grid;
  grid-template-columns: 106fr 40px 104fr;
  align-items: center;
}

.field-pair label {
  padding-left: 5px;
}

.dots {
  padding: 0 4px;
  font-size: 11px;
  color: #5584bd;
}

.at {
  margin-right: 5px;
  font-size: 12px;
  color: #1743e0;
}

.num,
.field .num {
  text-align: right;
}

/* Sidebar */
.work {
  flex: 1;
  display: flex;
}

.sidebar {
  width: 215px;
  flex: none;
  display: flex;
  flex-direction: column;
  gap: 7px;
  font-family: "Open Sans", sans-serif;
}

.side-box {
  flex: 1;
  display: flex;
  flex-direction: column;
  border: 1px solid #6694cf;
  background: #fff;
}

.side-box h2 {
  margin: 0;
  height: 27px;
  padding-left: 10px;
  border-bottom: 1px solid #6694cf;
  background: linear-gradient(#e6f0ff, #b2d3ff);
  font-size: 14px;
  line-height: 26px;
  color: #1d4b92;
}

.actions {
  flex: 1;
  padding: 8px 8px 0 4px;
}

.actions button {
  width: 100%;
  height: 23px;
  display: flex;
  align-items: center;
  gap: 4px;
  white-space: nowrap;
}

.actions button:disabled {
  color: #7b7b7b;
}

.actions hr {
  height: 1px;
  margin: 1px 0 1px 21px;
  border: none;
  background: #6694cf;
}

.side-nav button {
  display: block;
  width: 100%;
  height: 32px;
  padding-left: 26px;
  border-top: 1px solid #6694cf;
  background: linear-gradient(#e0edff, #c3ddff 40%, #acd1ff 40%, #bfdaff);
  font-weight: bold;
  text-align: left;
  color: #1d4b92;
}

.side-nav .active {
  background: linear-gradient(#ffdcb0, #ffc27a 38%, #ffa834 40%, #ffe272);
}

.cargo {
  height: 20px;
  display: flex;
  align-items: center;
  gap: 13px;
  padding-left: 1px;
  border: 1px solid #6694cf;
  background: linear-gradient(#f0f6ff, #bcd9ff);
  color: #07156e;
}

.cargo button {
  width: 16px;
  height: 16px;
  border: 1px solid #8aa3c4;
  border-radius: 2px;
  background: #edf4fe;
}

.cargo svg {
  display: block;
  width: 12px;
  height: 12px;
  margin: 1px;
}

.v-splitter {
  width: 16px;
  flex: none;
  position: relative;
  background: linear-gradient(90deg, transparent 6px, #fff 6px, #fff 9px, #cfe1fa 9px, #cfe1fa 10px, transparent 10px);
}

.v-splitter::after {
  content: "";
  position: absolute;
  left: 6px;
  top: 49%;
  border: 3px solid transparent;
  border-right-color: #4d7cc4;
  border-left: none;
}

main {
  flex: 1;
  min-width: 0;
  display: flex;
  flex-direction: column;
}

/* Grids */
.grid {
  border-collapse: separate;
  border-spacing: 0;
  table-layout: fixed;
}

.grid th {
  height: 19px;
  padding: 1px 0 0 1px;
  border-right: 1px solid #6694cf;
  border-bottom: 1px solid #6694cf;
  background: linear-gradient(#fff, #c9e0ff);
  font-weight: normal;
  text-align: left;
  white-space: nowrap;
  overflow: hidden;
}

.grid td {
  height: 18px;
  padding: 1px 2px 0;
  white-space: nowrap;
  overflow: hidden;
}

.sort {
  float: right;
  margin: 4px 6px 0 0;
  border: 5px solid transparent;
  border-bottom-color: #8cc0f7;
  border-top: none;
}

.grid .ind {
  border-right: 1px solid #6694cf;
  border-bottom: 1px solid #6694cf;
  background: linear-gradient(#fff, #c4dcff);
}

.grid .current {
  padding: 0;
}

.grid .current::before {
  content: "";
  display: block;
  width: 6px;
  height: 6px;
  border: 2px solid #6aa3ea;
  border-left: none;
  border-bottom: none;
  transform: rotate(45deg);
}

.lines {
  border: 1px solid #b5c8e2;
  display: flex;
  flex-direction: column;
}

.lines-grid {
  width: 1084px;
  margin-bottom: 86px;
}

.lines-grid th {
  padding-left: 2px;
}

.lines-grid td {
  height: 17px;
  padding: 1px 2px 0 1px;
  background: #7b97de;
  color: #fff;
}

.lines-grid .order {
  background: #fff;
  color: #000;
}

.order .dots {
  float: left;
}

.lines-grid .price {
  background: #ff0;
  color: #000;
}

.lines-grid col:nth-child(1) { width: 12px; }
.lines-grid col:nth-child(2) { width: 53px; }
.lines-grid col:nth-child(3) { width: 59px; }
.lines-grid col:nth-child(4) { width: 70px; }
.lines-grid col:nth-child(5) { width: 121px; }
.lines-grid col:nth-child(6) { width: 53px; }
.lines-grid col:nth-child(7) { width: 41px; }
.lines-grid col:nth-child(8) { width: 100px; }
.lines-grid col:nth-child(9) { width: 39px; }
.lines-grid col:nth-child(10) { width: 62px; }
.lines-grid col:nth-child(11) { width: 85px; }
.lines-grid col:nth-child(12) { width: 100px; }
.lines-grid col:nth-child(13) { width: 100px; }
.lines-grid col:nth-child(14) { width: 100px; }
.lines-grid col:nth-child(15) { width: 89px; }

.grid-foot {
  display: flex;
  gap: 50px;
  height: 27px;
  background: #e1edff;
}

.navigator {
  display: flex;
}

.navigator button {
  width: 26px;
  background: linear-gradient(#e6f0ff, #d5e6ff 30%, #bfdaff 30%, #bfdaff);
  fill: #16408c;
}

.navigator button:disabled {
  fill: #929292;
}

.navigator svg {
  display: block;
  width: 20px;
  height: 18px;
  margin: -2px auto 0;
}

.navigator span {
  width: 34px;
  line-height: 27px;
  text-align: center;
  color: #07156e;
}

.links .navigator span {
  background: #fff;
  color: #000;
}

.scrollbar {
  flex: 1;
  display: flex;
  align-items: center;
  padding: 0 5px 2px;
  background: linear-gradient(#f8f8f8, #ececec 40%, #eee);
}

.arrow-l,
.arrow-r {
  border: 5px solid transparent;
}

.arrow-l {
  border-right-color: #46527d;
  border-left: none;
}

.arrow-r {
  margin-left: auto;
  border-left-color: #46527d;
  border-right: none;
}

.off .arrow-l {
  border-right-color: #8f9fc8;
}

.off .arrow-r {
  border-left-color: #8f9fc8;
}

.thumb {
  width: 60%;
  height: 26px;
  margin: 1px 0 0 7px;
  border: 1px solid #4f618c;
  border-radius: 1px;
  background:
    repeating-linear-gradient(90deg, #56648c 0 1px, transparent 1px 2px) center / 8px 8px no-repeat,
    linear-gradient(#dbe1ea, #d0d8e4 25%, #b2c0d4 28%, #b9c7da 70%, #dbe4f2);
}

.h-splitter {
  position: relative;
  height: 3px;
  margin: 6px 0;
  border-top: 2px solid #fff;
  border-bottom: 1px solid #c5dbf8;
}

.h-splitter::after {
  content: "";
  position: absolute;
  left: calc(50% - 9px);
  top: -1px;
  width: 18px;
  height: 2px;
  background: repeating-linear-gradient(90deg, #6694cf 0 3px, #fff 3px 4px);
}

/* Tabs */
.tabs {
  display: flex;
  align-items: flex-end;
  gap: 1px;
  height: 24px;
  padding-left: 3px;
}

.tabs button {
  position: relative;
  height: 21px;
  flex: none;
  padding: 1px 0 0 3px;
  border: 1px solid #93a8cf;
  border-bottom: none;
  border-radius: 2px 2px 0 0;
  background: linear-gradient(#e2edfc, #cfe0f8 45%, #b6d0f3 50%, #d3e4fa);
  color: #1c4587;
  text-align: left;
  white-space: nowrap;
}

.tabs .active {
  height: 24px;
  background: #f6f834;
  color: #000;
}

.tabs button:nth-child(1) { width: 71px; }
.tabs button:nth-child(2) { width: 64px; }
.tabs button:nth-child(3) { width: 63px; }
.tabs button:nth-child(4) { width: 67px; }
.tabs button:nth-child(5) { width: 62px; }
.tabs button:nth-child(6) { width: 55px; }
.tabs button:nth-child(7) { width: 59px; }
.tabs button:nth-child(8) { width: 53px; }
.tabs button:nth-child(9) { width: 37px; }
.tabs button:nth-child(10) { width: 53px; }
.tabs button:nth-child(11) { width: 78px; }
.tabs button:nth-child(12) { width: 82px; }
.tabs button:nth-child(13) { width: 31px; }

.badge {
  position: absolute;
  width: 23px;
  height: 23px;
  border-radius: 50%;
  background: #f00;
  color: #fff;
  font: 16px/23px "Liberation Sans", sans-serif;
  text-align: center;
}

.tabs .badge {
  left: -24px;
  top: 1px;
}

.tab-pane {
  display: flex;
  margin-right: 1px;
  padding: 8px 12px 12px 8px;
  border: 1px solid #8fa4cc;
  background: #f2f7ff;
  box-shadow: 1px 1px 2px #a9bbd8;
}

.side-tabs {
  width: 60px;
  flex: none;
  margin-right: -1px;
  padding-top: 3px;
  z-index: 1;
}

.side-tabs button {
  display: block;
  position: relative;
  width: 57px;
  height: 29px;
  margin-left: 2px;
  border: 1px solid #93a8cf;
  border-right: none;
  border-radius: 2px 0 0 2px;
  background: linear-gradient(90deg, #e4eefc, #b3cef3 15%, #d8e6f9);
  color: #1c4587;
}

.side-tabs .active {
  width: 61px;
  height: 27px;
  margin: 1px 0 0;
  background: #f6f834;
  color: #000;
}

.side-tabs .badge {
  left: -23px;
  top: 2px;
}

.inner-pane {
  flex: 1;
  min-width: 0;
  padding: 8px;
  border: 1px solid #8fa4cc;
  background: #f2f7ff;
  box-shadow: 1px 1px 2px #a9bbd8;
}

.links {
  position: relative;
  border: 1px solid #b5c8e2;
  background: #fff;
}

.links-view {
  overflow: hidden;
}

.links-grid {
  width: 1024px;
}

.links-grid tbody td {
  border-right: 1px solid #e1edfd;
  border-bottom: 1px solid #e1edfd;
  background: #f6fbff;
}

.links-grid tbody tr:nth-child(even) td {
  background: #f4fcf3;
}

.links-grid tbody .ind,
.links-grid tbody tr:nth-child(even) .ind {
  border-color: #6694cf;
  background: linear-gradient(#fff, #c4dcff);
}

.links-grid tbody tr.filler td {
  height: 38px;
  border: none;
  background: #fff;
}

.links-grid tfoot td {
  height: 25px;
  padding: 0 1px 0 0;
  border-top: 1px solid #6694cf;
  background: linear-gradient(#f2f7ff, #c4dcff);
}

.links-grid output {
  display: block;
  height: 21px;
  padding-right: 3px;
  border: 1px solid #9dbfe8;
  background: linear-gradient(#fafcff, #e0ecfd);
  line-height: 20px;
  text-align: right;
  color: #16408c;
}

.links-grid col { width: 64px; }
.links-grid col:nth-child(1) { width: 12px; }
.links-grid col:nth-child(2) { width: 44px; }
.links-grid col:nth-child(3) { width: 130px; }
.links-grid col:nth-child(4) { width: 56px; }
.links-grid col:nth-child(5) { width: 52px; }
.links-grid col:nth-child(6) { width: 53px; }
.links-grid col:nth-child(7) { width: 48px; }
.links-grid col:nth-child(8) { width: 46px; }
.links-grid col:nth-child(9) { width: 58px; }
.links-grid col:nth-child(11) { width: 52px; }
.links-grid col:nth-child(12) { width: 51px; }
.links-grid col:nth-child(13) { width: 57px; }
.links-grid col:nth-child(14) { width: 45px; }

/* Red frame around the tracking numbers */
.mark {
  position: absolute;
  left: 53px;
  top: 19px;
  width: 73px;
  height: 89px;
  border: 3px solid #f00;
}

.mark .badge {
  left: -25px;
  top: -8px;
}

/* Totals */
.totals {
  display: flex;
  width: 824px;
  margin-top: 8px;
  border: 1px solid #6694cf;
}

.total-box {
  flex: 226 1 0;
}

.total-box.normal {
  flex: 203 1 0;
}

.total-box.discount {
  flex: 168 1 0;
}

.total-box + .total-box {
  border-left: 2px solid #6694cf;
}

.total-box h3 {
  margin: 0;
  height: 19px;
  padding-left: 10px;
  border-bottom: 1px solid #6694cf;
  background: linear-gradient(#eef5ff, #b4d5ff);
  font-size: 11px;
  font-weight: normal;
  line-height: 19px;
  color: #07156e;
}

.total-form {
  display: grid;
  grid-template-columns: 48px 1fr;
  grid-auto-rows: 19px;
  align-items: center;
  padding: 11px 8px;
  color: #07156e;
}

.discount .total-form {
  grid-template-columns: 51px 1fr;
}

.cells {
  display: flex;
  gap: 7px;
}

.cells input {
  flex: 66 1 0;
  width: 0;
  min-width: 0;
  height: 19px;
  padding: 0 1px;
  border: 1px solid #b5cae6;
  background: #fff;
  text-align: right;
  color: #000;
}

.total-box:not(.normal) .cells input:last-child {
  flex-grow: 80;
}

.cells input:read-only {
  background: #e1edff;
}

.cells.edit {
  border: 1px solid #b5cae6;
  background: #fff;
}

.cells.edit input {
  height: 17px;
  border: none;
}
```
